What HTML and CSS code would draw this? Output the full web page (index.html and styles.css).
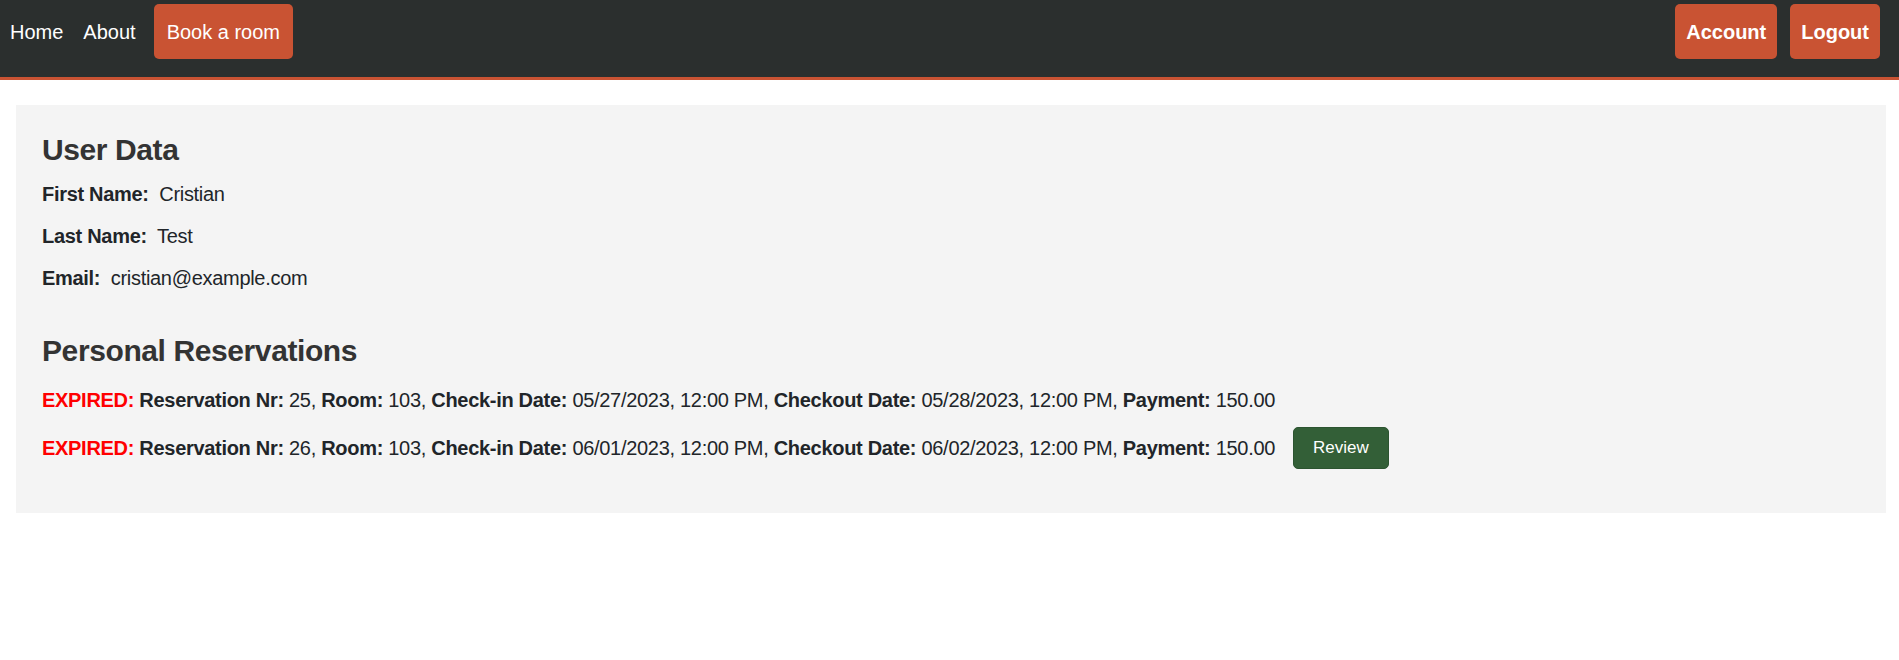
FILE: index.html
```html
<!DOCTYPE html>
<html lang="en">
<head>
<meta charset="utf-8">
<title>Account</title>
<link rel="stylesheet" href="styles.css">
</head>
<body>
<nav class="navbar">
  <div class="nav-left">
    <a class="nav-link" href="#">Home</a>
    <a class="nav-link" href="#">About</a>
    <a class="nav-btn" href="#">Book a room</a>
  </div>
  <div class="nav-right">
    <a class="nav-btn bold" href="#">Account</a>
    <a class="nav-btn bold" href="#">Logout</a>
  </div>
</nav>
<main class="panel">
  <h2 class="title">User Data</h2>
  <p class="field"><b>First Name:</b>&nbsp; Cristian</p>
  <p class="field"><b>Last Name:</b>&nbsp; Test</p>
  <p class="field"><b>Email:</b>&nbsp; cristian@example.com</p>

  <h2 class="title second">Personal Reservations</h2>
  <div class="res-row">
    <span class="res-text"><b class="expired">EXPIRED:</b> <b>Reservation Nr:</b> 25, <b>Room:</b> 103, <b>Check-in Date:</b> 05/27/2023, 12:00 PM, <b>Checkout Date:</b> 05/28/2023, 12:00 PM, <b>Payment:</b> 150.00</span>
  </div>
  <div class="res-row last">
    <span class="res-text"><b class="expired">EXPIRED:</b> <b>Reservation Nr:</b> 26, <b>Room:</b> 103, <b>Check-in Date:</b> 06/01/2023, 12:00 PM, <b>Checkout Date:</b> 06/02/2023, 12:00 PM, <b>Payment:</b> 150.00</span>
    <button class="review-btn" type="button">Review</button>
  </div>
</main>
</body>
</html>
```
FILE: styles.css
```css
* {
  box-sizing: border-box;
}

body {
  margin: 0;
  font-family: "Liberation Sans", Arial, sans-serif;
  font-size: 20px;
  color: #212529;
  background: #ffffff;
}

.navbar {
  display: flex;
  justify-content: space-between;
  align-items: flex-start;
  height: 80px;
  padding: 4px 19px 0 10px;
  background: #2b2f2e;
  border-bottom: 3px solid #c95333;
}

.nav-left,
.nav-right {
  display: flex;
  align-items: center;
}

.nav-right {
  gap: 13px;
}

.nav-link {
  color: #ffffff;
  text-decoration: none;
  line-height: 26px;
  margin-right: 20px;
}

.nav-link + .nav-link {
  margin-right: 18px;
}

.nav-btn {
  display: flex;
  align-items: center;
  height: 55px;
  padding: 0 13px;
  line-height: 26px;
  color: #ffffff;
  text-decoration: none;
  background: #c95333;
  border-radius: 5px;
}

.nav-btn.bold {
  font-weight: bold;
  padding: 0 11px;
}

.panel {
  display: block;
  margin: 25px 13px 0 16px;
  padding: 27px 26px 44px;
  background: #f4f4f4;
  letter-spacing: -0.3px;
}

.title {
  margin: 0 0 13px;
  font-size: 30px;
  line-height: 36px;
  font-weight: bold;
  color: #333333;
  letter-spacing: -0.4px;
}

.title.second {
  margin-top: 42px;
  margin-bottom: 18px;
}

.field {
  margin: 0 0 16px;
  line-height: 26px;
}

.res-row {
  display: flex;
  align-items: center;
  gap: 18px;
  margin-bottom: 14px;
  line-height: 26px;
}

.res-row.last {
  margin-bottom: 0;
}

.expired {
  color: #ff0000;
}

.review-btn {
  height: 42px;
  padding: 0 19px;
  font-family: "Liberation Sans", Arial, sans-serif;
  font-size: 17px;
  letter-spacing: 0;
  color: #ffffff;
  background: #335f37;
  border: 1px solid #2c5430;
  border-radius: 5px;
  cursor: pointer;
}
```
